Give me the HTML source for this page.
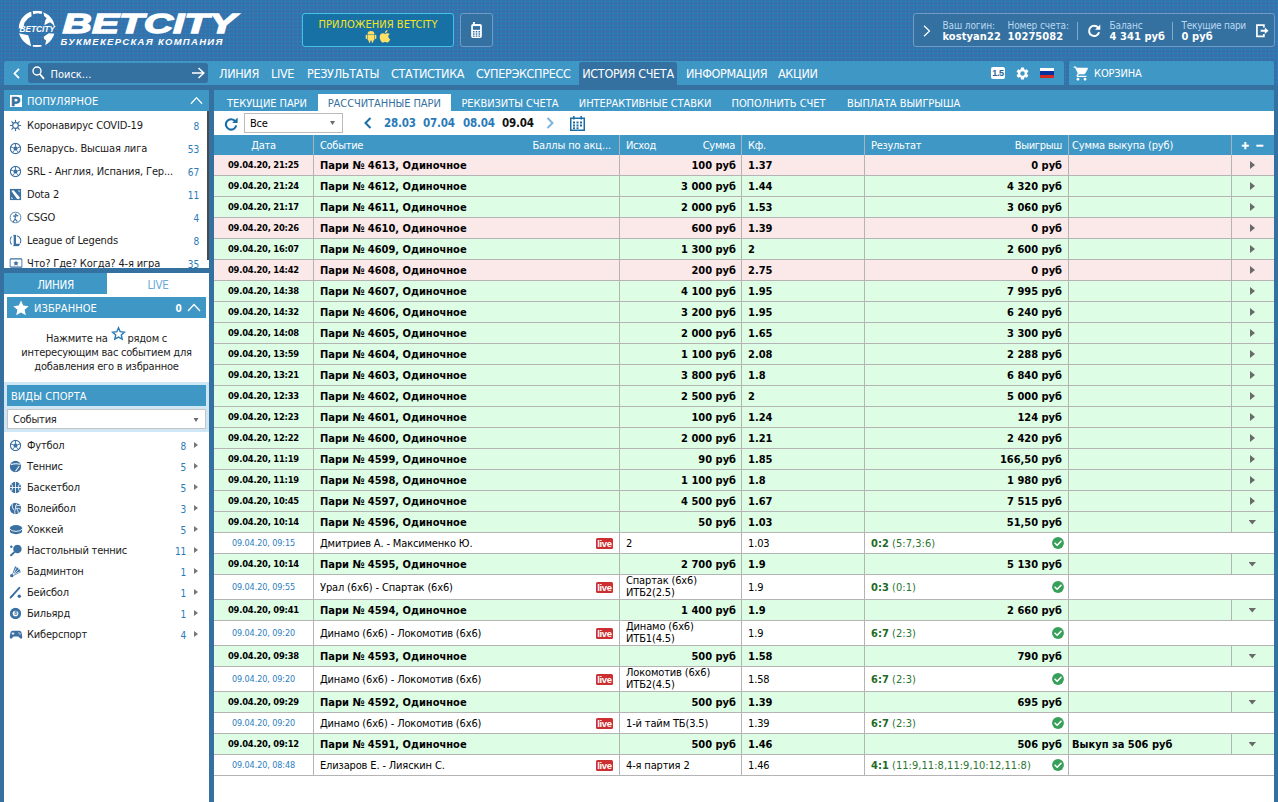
<!DOCTYPE html>
<html lang="ru"><head><meta charset="utf-8"><title>BETCITY - История счета</title>
<style>
*{box-sizing:border-box;margin:0;padding:0}
html,body{width:1278px;height:802px;overflow:hidden}
body{background:#3470a0;font-family:"DejaVu Sans Condensed","Liberation Sans",sans-serif;font-size:11px;color:#000;position:relative}
i{font-style:normal}
.abs{position:absolute}
#top{position:absolute;left:0;top:0;width:1278px;height:85px;background-color:#3a6fa6;
 background-image:linear-gradient(to right,transparent 1px,#2c7cba 1px,#2c7cba 2px,transparent 2px),linear-gradient(to bottom,transparent 1px,#2c7cba 1px,#2c7cba 2px,transparent 2px);background-size:4px 4px}
/* ---------- main ---------- */
#main{position:absolute;left:214px;top:90px;width:1060px;height:712px;background:#fff;overflow:hidden}
#subtabs{position:relative;height:21px;background:#3f97c6;color:#fff;font-size:11px;letter-spacing:-0.06px}
#subtabs .st{position:absolute;top:4px;height:17px;line-height:19px;white-space:nowrap}
#subtabs .st.act{background:#fff;color:#3470a0;text-align:center}
#filter{position:relative;height:24px;background:#fff}
#filter .refresh{position:absolute;left:10px;top:6px}
#filter .sel{position:absolute;left:30px;top:2px;width:99px;height:20px;border:1px solid #bbb;background:#fff;font-size:11px;line-height:20px;padding-left:5px;letter-spacing:-0.3px}
#filter .sel i{position:absolute;right:7px;top:7px;width:5px;height:4px;background:#6a6a6a;clip-path:polygon(0 0,100% 0,50% 100%)}
#filter .chl{position:absolute;left:150px;top:6px}
#filter .chr{position:absolute;left:332px;top:6px}
#filter .cal{position:absolute;left:356px;top:5px}
#filter .dt{position:absolute;top:4px;font-weight:bold;font-size:11.5px;color:#2a7ab8;line-height:16px;letter-spacing:-0.2px}
#filter .dt.cur{color:#111}
.tr{display:flex;height:21px;border-bottom:1px solid #b4b4b4;white-space:nowrap}
.tr .c{height:100%;border-right:1px solid #b4b4b4;line-height:22px;padding:0 6px;overflow:hidden;position:relative;flex:none}
.c1{width:100px;text-align:center;padding:0 !important}
.c2{width:306px}.c3{width:122px}.c4{width:123px}.c5{width:204px}.c6{width:163px;padding-left:3px !important}.c7{width:42px;border-right:0 !important;padding:0 !important}
.c67{width:205px;border-right:0 !important}
.rt{text-align:right;padding-right:5px !important}
.c5.rt{padding-right:6px !important}
.tr.th .c6{letter-spacing:-0.16px}
.tr.th{height:20px;background:#3f97c6;color:#fff;border-bottom:0;letter-spacing:-0.3px}
.tr.th .c{line-height:22px;border-right-color:#a9b4ba}
.tr.th .bp{position:absolute;right:8px;top:0;letter-spacing:-0.12px}
.tr.th .hr{position:absolute;right:6px;top:0}
.tr.th .pm{position:absolute;top:0;font-size:10px;-webkit-text-stroke:0.6px #fff;font-family:"DejaVu Sans",sans-serif}
.tr.th .pm:nth-child(1){left:9px}.tr.th .pm:nth-child(2){left:23.5px}
.tr.p{font-weight:bold}
.tr.p.r{background:#fbe8e8}
.tr.p.g{background:#ddfde5}
.tr.p .c1{font-size:9.3px;letter-spacing:-0.2px;line-height:20px}
.tr.ch{background:#fff;letter-spacing:-0.15px}
.tr.ch .c1{font-size:9px;color:#2c7ebf;letter-spacing:-0.1px;line-height:21px}
.tr.ch.two{height:25px}
.tr.ch.two .c{line-height:26px}
.tr.ch.two .c3{line-height:12px;padding-top:0}
.ar{position:absolute;left:18px;top:6px;border:4px solid transparent;border-left:5px solid #6a6a6a;border-right:0}
.ad{position:absolute;left:16.5px;top:8px;width:7.5px;height:4.5px;background:#6a6a6a;clip-path:polygon(0 0,100% 0,50% 100%)}
.live{position:absolute;right:6px;top:5px;width:17px;height:11px;background:#cb2f31;color:#fff;font-family:"Liberation Sans",sans-serif;font-weight:bold;font-size:9.5px;line-height:11.5px;text-align:center;letter-spacing:-0.3px;border-radius:1.5px}
.tr.ch.two .live{top:7px}
.tr.ch.two .c1{line-height:25px}
.sc{color:#2a7530;letter-spacing:0.04px}
.sc b{color:#1e6b25}
.ok{position:absolute;right:4px;top:4px}
.tr.ch.two .ok{top:6px}
/* ---------- header ---------- */
#apps{left:302px;top:13px;width:152px;height:34px;background:#1871a4;border:1px solid #45c3e6;border-radius:3px;color:#f2e61e;font-size:11px;text-align:center}
#apps .t{line-height:13px;margin-top:4px;letter-spacing:0.05px;white-space:nowrap}
#mob{left:460px;top:13px;width:33px;height:34px;background:#3470a0;border:1px solid #6d9cc6;border-radius:3px}
#login{left:913px;top:13px;width:362px;height:34px;background:#3470a0;border:1px solid #6d9cc6;border-radius:3px;color:#fff;white-space:nowrap}
#login .lb{position:absolute;top:6px;font-size:10px;line-height:12px;color:#b9d9f1;letter-spacing:-0.12px}
#login .lv{position:absolute;top:16px;font-size:11px;line-height:13px;color:#fff;letter-spacing:0.08px}
#login .sep{position:absolute;top:8px;width:1px;height:18px;background:#7fa9cf}
#nav{left:4px;top:61px;width:1060px;height:24px;background:#3f97c6;color:#fff;border-radius:3px 3px 0 0}
#basket{left:1069px;top:61px;width:205px;height:24px;background:#3f97c6;border-radius:3px 3px 0 0}
#search{left:24px;top:2px;width:180px;height:20px;background:#3470a0;border-radius:3px}
.ni{position:absolute;top:0;height:24px;line-height:26px;font-size:12.5px;letter-spacing:-0.33px;white-space:nowrap}
.ni.act{background:#3470a0;text-align:center;border-radius:3px 3px 0 0;top:1px;height:23px;line-height:24px}
#b15{left:987px;top:6px;width:14px;height:12px;background:#fff;color:#2b5f92;border-radius:2px;font-family:"Liberation Sans",sans-serif;font-weight:bold;font-size:9px;line-height:12.5px;text-align:center;letter-spacing:-0.4px}
#flag{left:1036px;top:7px;width:14px;height:10px}
#flag i{display:block;height:3.34px}
/* ---------- sidebar ---------- */
#side{left:4px;top:90px;width:205px;height:712px}
.shd{background:#3f97c6;color:#fff;white-space:nowrap}
.shd span{position:absolute;top:0;line-height:23px;font-size:11px;letter-spacing:0.08px}
.pbox{position:absolute;left:5.5px;top:4.5px;width:12.5px;height:12.5px;background:#fff;color:#3470a0;font-family:"Liberation Sans",sans-serif;font-size:13.5px;line-height:13px;text-align:center;font-weight:bold;-webkit-text-stroke:0.7px #3470a0;overflow:hidden}
#pop{left:0;top:21px;width:205px;height:157px;background:#fff;overflow:hidden;padding-top:3px}
.pr{position:relative;height:23px;line-height:23px;white-space:nowrap;letter-spacing:-0.15px}
.sr{position:relative;height:21px;line-height:21px;white-space:nowrap;letter-spacing:-0.2px}
.ic{position:absolute;left:5px;top:5px;width:14px;height:13px;line-height:0}
.sr .ic{top:4px}
.tx{position:absolute;left:23px;top:0;color:#1a1a1a}
.pr .n{position:absolute;right:10px;top:0.500px;color:#2a7ab8;font-size:10px}
.sr .n{position:absolute;right:23px;top:0.500px;color:#2a7ab8;font-size:10px}
.ar2{position:absolute;left:190px;top:7px;border:3.5px solid transparent;border-left:4.500px solid #777;border-right:0}
.thumb{position:absolute;left:202.500px;top:0;width:2.500px;height:149px;background:#4a4a4a}
#tabs{left:0;top:183px;width:205px;height:21px;background:#fff;font-size:11.5px;letter-spacing:-0.3px}
#tabs .t1{position:absolute;left:0;top:0;width:103px;height:21px;line-height:24px;text-align:center;background:#3f97c6;color:#fff}
#tabs .t2{position:absolute;left:103px;top:0;width:102px;height:21px;line-height:24px;text-align:center;color:#6aaad8}
#sbody{left:0;top:204px;width:205px;height:508px;background:#fff}
#favtxt{left:0;top:38px;width:205px;text-align:center;line-height:14px;color:#222;letter-spacing:-0.22px}
#vs{left:0;top:88px;width:205px;height:50px;background:#cfe6f4}
#vsel{left:3px;top:27px;width:199px;height:20px;background:#fff;border:1px solid #c4c4c4;line-height:19px;padding-left:5px;letter-spacing:-0.2px;color:#222}
#vsel i{position:absolute;right:6.5px;top:8px;width:5px;height:4px;background:#6a6a6a;clip-path:polygon(0 0,100% 0,50% 100%)}
#sports{left:0;top:141px;width:205px}

.ic svg{transform:scale(0.94);transform-origin:50% 50%}

</style></head>
<body>
<div id="top"></div>
<!-- logo -->
<svg id="logo" class="abs" style="left:14px;top:6px" width="230" height="46" viewBox="0 0 230 46">
 <defs><clipPath id="gc"><circle cx="22.8" cy="22.9" r="18.2"/></clipPath></defs>
 <g clip-path="url(#gc)" fill="#fff"><polygon points="4.3,22.6 9.0,21.9 10.6,16.5 14.2,12.3 17.6,10.2 17.2,5.3 10.4,7.1 5.2,14.2"/><polygon points="18.4,4.3 28.7,4.8 27.5,8.1 23.6,7.2 19.3,8.3"/><polygon points="29.4,6.2 34.8,9.0 39.1,14.2 41.4,20.8 41.4,22.2 38.6,18.2 36.0,16.2 33.1,17.7 30.3,19.2 31.3,14.2 32.7,12.3 30.1,10.0"/><polygon points="4.8,27.3 14.2,29.2 15.6,33.4 17.2,40.5 13.2,39.1 8.1,34.8 5.5,30.4"/><polygon points="18.9,39.1 27.3,39.1 28.1,41.4 18.7,41.4"/><polygon points="29.7,30.8 34.8,27.3 40.9,27.8 39.1,33.9 35.0,38.1 30.9,40.2 32.2,34.4 30.1,33.0"/></g>
 <text x="5.4" y="26.3" font-family="Liberation Sans, sans-serif" font-weight="bold" font-style="italic" font-size="8.8" fill="#fff" textLength="35.5" lengthAdjust="spacingAndGlyphs">BETCITY</text>
 <text x="48.6" y="27.35" font-family="Liberation Sans, sans-serif" font-weight="bold" font-style="italic" font-size="27.6" fill="#fff" stroke="#fff" stroke-width="1.3" textLength="173.6" lengthAdjust="spacingAndGlyphs">BETCITY</text>
 <text x="46.4" y="39.2" font-family="Liberation Sans, sans-serif" font-weight="bold" font-style="italic" font-size="9.5" fill="#fff" textLength="162" lengthAdjust="spacing">БУКМЕКЕРСКАЯ КОМПАНИЯ</text>
</svg>
<!-- apps button -->
<div class="abs" id="apps"><div class="t">ПРИЛОЖЕНИЯ BETCITY</div>
<svg class="abs" style="left:62px;top:15.500px" width="26" height="13" viewBox="0 0 26 13"><g fill="#ffe066"><path d="M2.6 4.6 h6.8 v5.2 a0.8 0.8 0 0 1 -0.8 0.8 h-5.2 a0.8 0.8 0 0 1 -0.8 -0.8 Z"/><path d="M2.6 4.1 a3.4 3.1 0 0 1 6.8 0 Z"/><rect x="0.7" y="4.7" width="1.4" height="4.2" rx="0.7"/><rect x="9.9" y="4.7" width="1.4" height="4.2" rx="0.7"/><rect x="3.8" y="9.5" width="1.5" height="3.2" rx="0.7"/><rect x="6.7" y="9.5" width="1.5" height="3.2" rx="0.7"/><path d="M22.6 3.2 c-1 0 -1.6 0.6 -2.4 0.6 c-0.8 0 -1.5 -0.6 -2.5 -0.6 c-1.6 0 -3 1.4 -3 3.8 c0 2.6 1.8 5.6 3.2 5.6 c0.8 0 1.2 -0.5 2.2 -0.5 c1 0 1.3 0.5 2.2 0.5 c1.2 0 2.3 -1.8 2.9 -3.4 c-1.2 -0.5 -1.9 -1.5 -1.9 -2.7 c0 -1.1 0.6 -2 1.5 -2.5 c-0.6 -0.6 -1.4 -0.8 -2.2 -0.8 Z"/><path d="M20 3 c0 -1.5 1.1 -2.8 2.5 -2.9 c0.1 1.6 -1.1 2.9 -2.5 2.9 Z"/></g></svg>
</div>
<!-- mobile button -->
<div class="abs" id="mob"><svg width="11" height="16" viewBox="0 0 12 18" style="position:absolute;left:9.800px;top:8px"><path d="M2 0 h2.2 v2.2 H10 a2 2 0 0 1 2 2 V16 a2 2 0 0 1 -2 2 H2 a2 2 0 0 1 -2 -2 V4.2 a2 2 0 0 1 2 -2 Z" fill="#fff"/><rect x="2" y="4.6" width="8" height="4.2" fill="#3470a0"/><g fill="#3470a0"><rect x="2" y="10.2" width="1.8" height="1.6"/><rect x="5.1" y="10.2" width="1.8" height="1.6"/><rect x="8.2" y="10.2" width="1.8" height="1.6"/><rect x="2" y="12.7" width="1.8" height="1.6"/><rect x="5.1" y="12.7" width="1.8" height="1.6"/><rect x="8.2" y="12.7" width="1.8" height="1.6"/><rect x="2" y="15.2" width="1.8" height="1.4"/><rect x="5.1" y="15.2" width="1.8" height="1.4"/><rect x="8.2" y="15.2" width="1.8" height="1.4"/></g></svg></div>
<!-- login box -->
<div class="abs" id="login">
 <svg class="abs" style="left:8.500px;top:11px" width="8" height="12" viewBox="0 0 8 12"><path d="M1 0.8 L6.5 6 L1 11.2" fill="none" stroke="#fff" stroke-width="1.2"/></svg>
 <span class="lb" style="left:28.500px">Ваш логин:</span><b class="lv" style="left:28.500px">kostyan22</b>
 <span class="lb" style="left:93.500px">Номер счета:</span><b class="lv" style="left:93.500px">10275082</b>
 <i class="sep" style="left:163px"></i>
 <svg class="abs" style="left:172.500px;top:10px" width="14" height="14" viewBox="0 0 14 14"><path d="M11.2 3.8 A5.1 5.1 0 1 0 12.1 8.3" fill="none" stroke="#fff" stroke-width="2"/><path d="M13.3 0.6 L13.3 5.8 L8.1 5.8 Z" fill="#fff"/></svg>
 <span class="lb" style="left:195.500px">Баланс</span><b class="lv" style="left:195.500px">4 341 руб</b>
 <i class="sep" style="left:258px"></i>
 <span class="lb" style="left:267.500px;letter-spacing:-0.25px">Текущие пари</span><b class="lv" style="left:267.500px">0 руб</b>
 <svg class="abs" style="left:341.500px;top:10px" width="13" height="13.500" viewBox="0 0 14 14"><path d="M8.5 3.5 V1 H1 V13 H8.5 V10.5" fill="none" stroke="#fff" stroke-width="1.8"/><path d="M5 6 H9.5 V3.6 L13.5 7 L9.5 10.4 V8 H5 Z" fill="#fff"/></svg>
</div>
<!-- nav -->
<div class="abs" id="nav">
 <svg class="abs" style="left:9px;top:7px" width="7" height="11" viewBox="0 0 7 11"><path d="M6 0.8 L1.5 5.5 L6 10.2" fill="none" stroke="#fff" stroke-width="1.8"/></svg>
 <div class="abs" id="search">
  <svg class="abs" style="left:4px;top:3px" width="13" height="14" viewBox="0 0 13 14"><circle cx="5" cy="5" r="4" fill="none" stroke="#fff" stroke-width="1.4"/><path d="M7.8 8 L12 12.8" stroke="#fff" stroke-width="1.8"/></svg>
  <span class="abs" style="left:22.5px;top:0;line-height:23px;color:#fff;font-size:11px;letter-spacing:0">Поиск...</span>
  <svg class="abs" style="left:164px;top:4px" width="13" height="12" viewBox="0 0 13 12"><path d="M0 6 H11.5 M6.5 1 L11.8 6 L6.5 11" fill="none" stroke="#fff" stroke-width="1.5"/></svg>
 </div>
 <span class="ni" style="left:215px">ЛИНИЯ</span><span class="ni" style="left:267px">LIVE</span><span class="ni" style="left:303px">РЕЗУЛЬТАТЫ</span><span class="ni" style="left:387px">СТАТИСТИКА</span><span class="ni" style="left:472px">СУПЕРЭКСПРЕСС</span><span class="ni act" style="left:575px;width:98px">ИСТОРИЯ СЧЕТА</span><span class="ni" style="left:682px">ИНФОРМАЦИЯ</span><span class="ni" style="left:774px">АКЦИИ</span>
 <span class="abs" id="b15">1.5</span>
 <svg class="abs" style="left:1011px;top:4.5px" width="15" height="15" viewBox="0 0 24 24"><path fill="#fff" d="M19.14 12.94c.04-.3.06-.61.06-.94 0-.32-.02-.64-.07-.94l2.03-1.58a.49.49 0 0 0 .12-.61l-1.92-3.32a.49.49 0 0 0-.59-.22l-2.39.96c-.5-.38-1.03-.7-1.62-.94l-.36-2.54a.48.48 0 0 0-.48-.41h-3.84c-.24 0-.43.17-.47.41l-.36 2.54c-.59.24-1.13.57-1.62.94l-2.39-.96a.49.49 0 0 0-.59.22L2.74 8.87c-.12.21-.08.47.12.61l2.03 1.58c-.05.3-.09.63-.09.94s.02.64.07.94l-2.03 1.58a.49.49 0 0 0-.12.61l1.92 3.32c.12.22.37.29.59.22l2.39-.96c.5.38 1.03.7 1.62.94l.36 2.54c.05.24.24.41.48.41h3.84c.24 0 .44-.17.47-.41l.36-2.54c.59-.24 1.13-.56 1.62-.94l2.39.96c.22.08.47 0 .59-.22l1.92-3.32c.12-.22.07-.47-.12-.61l-2.01-1.58zM12 15.6A3.6 3.6 0 1 1 12 8.4a3.6 3.6 0 0 1 0 7.2z"/></svg>
 <div class="abs" id="flag"><i style="background:#fff"></i><i style="background:#0a30a0"></i><i style="background:#d52b1e"></i></div>
</div>
<div class="abs" id="basket">
 <svg class="abs" style="left:4px;top:4px" width="17" height="17" viewBox="0 0 24 24"><path fill="#fff" d="M7 18c-1.1 0-1.99.9-1.99 2S5.900 22 7 22s2-.9 2-2-.9-2-2-2zM1 2v2h2l3.600 7.590-1.350 2.450c-.16.280-.25.610-.25.960 0 1.100.9 2 2 2h12v-2H7.420c-.14 0-.25-.11-.25-.25l.03-.12.9-1.630h7.450c.75 0 1.410-.41 1.750-1.030l3.580-6.490A1.003 1.003 0 0 0 20 4H5.210l-.94-2H1zm16 16c-1.100 0-1.990.9-1.990 2s.890 2 1.990 2 2-.9 2-2-.9-2-2-2z"/></svg>
 <span class="abs" style="left:25px;top:0;line-height:25px;color:#fff;font-size:11px;letter-spacing:-0.15px">КОРЗИНА</span>
</div>

<div class="abs" id="side">
<div class="abs shd" style="left:0;top:0;width:205px;height:21px"><b class="pbox">P</b><span style="left:23px">ПОПУЛЯРНОЕ</span><svg class="abs" style="left:185.5px;top:6px" width="13" height="9" viewBox="0 0 14 9"><path d="M1 8L7 1.500L13 8" fill="none" stroke="#fff" stroke-width="1.300"/></svg></div>
<div class="abs" id="pop">
<div class="pr"><i class="ic"><svg width="13" height="13" viewBox="0 0 13 13"><circle cx="6.5" cy="6.5" r="3" fill="none" stroke="#3a70a2" stroke-width="1.3"/><g stroke="#3a70a2" stroke-width="1.2"><path d="M6.5 0.5V3M6.5 10V12.5M0.5 6.500H3M10 6.500H12.500M2.200 2.200L4 4M9 9L10.800 10.800M10.800 2.200L9 4M4 9L2.200 10.800"/></g></svg></i><span class="tx">Коронавирус COVID-19</span><span class="n">8</span></div>
<div class="pr"><i class="ic"><svg width="13" height="13" viewBox="0 0 13 13"><circle cx="6.5" cy="6.5" r="5.4" fill="#fff" stroke="#3a70a2" stroke-width="1.2"/><path d="M6.5 3.800L9 5.600L8 8.600H5L4 5.600Z" fill="#3a70a2"/><path d="M6.5 1V3.800M9 5.600L11.800 4.800M8 8.600L9.800 11M5 8.600L3.200 11M4 5.600L1.200 4.800" stroke="#3a70a2" stroke-width="1"/></svg></i><span class="tx">Беларусь. Высшая лига</span><span class="n">53</span></div>
<div class="pr"><i class="ic"><svg width="13" height="13" viewBox="0 0 13 13"><circle cx="6.5" cy="6.5" r="5.4" fill="#fff" stroke="#3a70a2" stroke-width="1.2"/><path d="M6.5 3.800L9 5.600L8 8.600H5L4 5.600Z" fill="#3a70a2"/><path d="M6.5 1V3.800M9 5.600L11.800 4.800M8 8.600L9.800 11M5 8.600L3.200 11M4 5.600L1.200 4.800" stroke="#3a70a2" stroke-width="1"/></svg></i><span class="tx">SRL - Англия, Испания, Гер...</span><span class="n">67</span></div>
<div class="pr"><i class="ic"><svg width="13" height="13" viewBox="0 0 13 13"><rect x="0.5" y="0.5" width="12" height="12" fill="#3a70a2"/><path d="M2 2.500L4.500 2L11 9.500L10.500 11.500L8 11Z" fill="#fff"/><path d="M9 2L11 2.500L10.800 4.500Z M2 9L4 11L2.200 11Z" fill="#fff"/></svg></i><span class="tx">Dota 2</span><span class="n">11</span></div>
<div class="pr"><i class="ic"><svg width="13" height="13" viewBox="0 0 13 13"><circle cx="6.5" cy="6.5" r="5.800" fill="#fff" stroke="#3a70a2" stroke-width="1"/><circle cx="6.800" cy="3.200" r="1" fill="#3a70a2"/><path d="M4 5L9.500 4.500M6.500 4.500L6 8L4 11.500M6 8L8.500 11" stroke="#3a70a2" stroke-width="1.200" fill="none"/></svg></i><span class="tx">CSGO</span><span class="n">4</span></div>
<div class="pr"><i class="ic"><svg width="13" height="13" viewBox="0 0 13 13"><path d="M2.300 2.500A6 6 0 0 0 2.300 10.500" fill="none" stroke="#3a70a2" stroke-width="1.200"/><path d="M8 1.500A5.500 5.500 0 0 1 11.500 9.500" fill="none" stroke="#3a70a2" stroke-width="1.200"/><path d="M3.800 0.500H7V10H11.500L10 12.500H3.800L4.600 11V2Z" fill="#3a70a2"/></svg></i><span class="tx">League of Legends</span><span class="n">8</span></div>
<div class="pr"><i class="ic"><svg width="14" height="13" viewBox="0 0 14 13"><rect x="0.600" y="1.600" width="12.800" height="8.800" rx="1" fill="#fff" stroke="#3a70a2" stroke-width="1.200"/><path d="M7 3.200L7.900 5.200L10 5.400L8.400 6.800L8.900 8.900L7 7.800L5.100 8.900L5.600 6.800L4 5.400L6.100 5.200Z" fill="#3a70a2"/><path d="M4 12.300H10" stroke="#3a70a2" stroke-width="1.200"/></svg></i><span class="tx">Что? Где? Когда? 4-я игра</span><span class="n">35</span></div>
<i class="thumb"></i></div>
<div class="abs" id="tabs"><span class="t1">ЛИНИЯ</span><span class="t2">LIVE</span></div>
<div class="abs" id="sbody">
<div class="abs shd" style="left:3px;top:3px;width:199px;height:21px"><svg class="abs" style="left:5.500px;top:2.500px" width="16" height="16" viewBox="0 0 15 15"><path d="M7.500 0.500L9.600 5.200L14.700 5.800L10.900 9.200L12 14.300L7.500 11.700L3 14.300L4.100 9.200L0.300 5.800L5.400 5.200Z" fill="#fff"/></svg><span style="left:27px">ИЗБРАННОЕ</span><b class="abs" style="left:168.500px;top:0;line-height:23px;font-size:10px">0</b><svg class="abs" style="left:180px;top:6px" width="14" height="9" viewBox="0 0 14 9"><path d="M1 8L7 1.500L13 8" fill="none" stroke="#fff" stroke-width="1.300"/></svg></div>
<div class="abs" id="favtxt">Нажмите на <svg width="15" height="15" viewBox="0 0 15 15" style="vertical-align:1px;margin:-6px -1px 0 0"><path d="M7.500 1.800L9.200 5.700L13.400 6.200L10.300 9L11.200 13.200L7.500 11.100L3.800 13.200L4.700 9L1.600 6.200L5.800 5.700Z" fill="none" stroke="#2a7ab8" stroke-width="1.400"/></svg> рядом с<br>интересующим вас событием для<br>добавления его в избранное</div>
<div class="abs" id="vs"><div class="abs shd" style="left:3px;top:3px;width:199px;height:21px"><span style="left:4px">ВИДЫ СПОРТА</span></div><div class="abs" id="vsel"><span>События</span><i></i></div></div>
<div class="abs" id="sports">
<div class="sr"><i class="ic"><svg width="13" height="13" viewBox="0 0 13 13"><circle cx="6.5" cy="6.5" r="5.4" fill="#fff" stroke="#3a70a2" stroke-width="1.2"/><path d="M6.5 3.800L9 5.600L8 8.600H5L4 5.600Z" fill="#3a70a2"/><path d="M6.5 1V3.800M9 5.600L11.800 4.800M8 8.600L9.800 11M5 8.600L3.200 11M4 5.600L1.200 4.800" stroke="#3a70a2" stroke-width="1"/></svg></i><span class="tx">Футбол</span><span class="n">8</span><i class="ar2"></i></div>
<div class="sr"><i class="ic"><svg width="13" height="13" viewBox="0 0 13 13"><circle cx="6.500" cy="6.500" r="6" fill="#3a70a2"/><path d="M1.500 4.500Q6.500 3 11.800 4.200" stroke="#fff" stroke-width="1.100" fill="none"/><path d="M10.500 6L6.500 11.500" stroke="#fff" stroke-width="1.100" fill="none"/></svg></i><span class="tx">Теннис</span><span class="n">5</span><i class="ar2"></i></div>
<div class="sr"><i class="ic"><svg width="13" height="13" viewBox="0 0 13 13"><circle cx="6.500" cy="6.500" r="6" fill="#3a70a2"/><path d="M6.500 0.500V12.500M0.500 6.500H12.500M2.200 2.200Q5 6.500 2.200 10.800M10.800 2.200Q8 6.500 10.800 10.800" stroke="#fff" stroke-width="0.900" fill="none"/></svg></i><span class="tx">Баскетбол</span><span class="n">5</span><i class="ar2"></i></div>
<div class="sr"><i class="ic"><svg width="13" height="13" viewBox="0 0 13 13"><circle cx="6.500" cy="6.500" r="6" fill="#3a70a2"/><path d="M6.500 6.500Q6 3 8.500 0.800M6.500 6.500Q9.500 5.500 12.300 7.500M6.500 6.500Q5 9.500 6 12.300M3 1.800Q2.500 5 4.500 8M11.500 3.500Q8.500 2.800 6.400 4M9.500 11.500Q9.500 9 8 7" stroke="#fff" stroke-width="0.900" fill="none"/></svg></i><span class="tx">Волейбол</span><span class="n">3</span><i class="ar2"></i></div>
<div class="sr"><i class="ic"><svg width="14" height="13" viewBox="0 0 14 13"><path d="M0.500 5V8.500A6.500 3 0 0 0 13.500 8.500V5Z" fill="#3a70a2"/><ellipse cx="7" cy="4.800" rx="6.500" ry="3" fill="#3a70a2" stroke="#fff" stroke-width="0"/><path d="M0.700 6.200A6.500 3 0 0 0 13.300 6.200" stroke="#fff" stroke-width="0.900" fill="none"/></svg></i><span class="tx">Хоккей</span><span class="n">5</span><i class="ar2"></i></div>
<div class="sr"><i class="ic"><svg width="14" height="13" viewBox="0 0 14 13"><circle cx="8.500" cy="4.800" r="4.500" fill="#3a70a2"/><path d="M5.500 8L1 12.300" stroke="#3a70a2" stroke-width="2"/><circle cx="2" cy="2.500" r="1.300" fill="#3a70a2"/></svg></i><span class="tx">Настольный теннис</span><span class="n">11</span><i class="ar2"></i></div>
<div class="sr"><i class="ic"><svg width="14" height="13" viewBox="0 0 14 13"><path d="M3 9.500L6 1L8 2L10.500 4L12.500 7L4.500 11Z" fill="#3a70a2"/><path d="M3.600 10.200L7.500 2M3.600 10.200L10 4M3.600 10.200L12 6.500" stroke="#fff" stroke-width="0.800"/><circle cx="2.500" cy="11" r="1.800" fill="#3a70a2"/></svg></i><span class="tx">Бадминтон</span><span class="n">1</span><i class="ar2"></i></div>
<div class="sr"><i class="ic"><svg width="14" height="13" viewBox="0 0 14 13"><path d="M1 12.300L10.500 1.500" stroke="#3a70a2" stroke-width="2" stroke-linecap="round"/><path d="M0.800 12.500L4 9" stroke="#3a70a2" stroke-width="1.100"/><circle cx="10.500" cy="10.500" r="1.800" fill="#3a70a2"/></svg></i><span class="tx">Бейсбол</span><span class="n">1</span><i class="ar2"></i></div>
<div class="sr"><i class="ic"><svg width="13" height="13" viewBox="0 0 13 13"><circle cx="6.500" cy="6.500" r="6" fill="#3a70a2"/><circle cx="6.500" cy="6.500" r="3" fill="#fff"/><text x="6.500" y="8.600" font-family="Liberation Sans,sans-serif" font-size="5.500" font-weight="bold" text-anchor="middle" fill="#3a70a2">8</text></svg></i><span class="tx">Бильярд</span><span class="n">1</span><i class="ar2"></i></div>
<div class="sr"><i class="ic"><svg width="14" height="13" viewBox="0 0 14 13"><path d="M3.500 2.500H10.500Q12.500 2.500 13 5L13.800 9.500Q13.800 11 12.300 11Q11.300 11 10.300 9.500L9.500 8.500H4.500L3.700 9.500Q2.700 11 1.700 11Q0.200 11 0.200 9.500L1 5Q1.500 2.500 3.500 2.500Z" fill="#3a70a2"/><path d="M3.800 4V7M2.300 5.500H5.300" stroke="#fff" stroke-width="0.900"/><circle cx="10.200" cy="4.700" r="0.700" fill="#fff"/><circle cx="11.300" cy="6" r="0.700" fill="#fff"/></svg></i><span class="tx">Киберспорт</span><span class="n">4</span><i class="ar2"></i></div>
</div></div></div>
<div id="main">
<div id="subtabs"><span class="st" style="left:13px">ТЕКУЩИЕ ПАРИ</span><span class="st act" style="left:104px;width:132.5px">РАССЧИТАННЫЕ ПАРИ</span><span class="st" style="left:247.4px">РЕКВИЗИТЫ СЧЕТА</span><span class="st" style="left:364.8px">ИНТЕРАКТИВНЫЕ СТАВКИ</span><span class="st" style="left:517.5px">ПОПОЛНИТЬ СЧЕТ</span><span class="st" style="left:633px">ВЫПЛАТА ВЫИГРЫША</span></div>
<div id="filter">
<svg class="refresh" width="14" height="14" viewBox="0 0 14 14"><path d="M11.3 4.4 A5.2 5.2 0 1 0 12.2 8.4" fill="none" stroke="#1a6ea5" stroke-width="2.1"/><path d="M13.6 0.6 L13.6 6 L8.2 6 Z" fill="#1a6ea5"/></svg>
<div class="sel"><span>Все</span><i></i></div>
<svg class="chl" width="8" height="12" viewBox="0 0 8 12"><path d="M6.5 1 L1.5 6 L6.5 11" fill="none" stroke="#1a6ea5" stroke-width="2"/></svg>
<span class="dt" style="left:170px">28.03</span><span class="dt" style="left:209px">07.04</span><span class="dt" style="left:249px">08.04</span><span class="dt cur" style="left:288px">09.04</span>
<svg class="chr" width="8" height="12" viewBox="0 0 8 12"><path d="M1.5 1 L6.5 6 L1.5 11" fill="none" stroke="#7db4dc" stroke-width="2"/></svg>
<svg class="cal" width="15" height="15" viewBox="0 0 15 15"><rect x="0.75" y="2.25" width="13.5" height="12" fill="none" stroke="#1a6ea5" stroke-width="1.5"/><rect x="3" y="0" width="1.6" height="3.5" fill="#1a6ea5"/><rect x="10.4" y="0" width="1.6" height="3.5" fill="#1a6ea5"/><g fill="#1a6ea5"><rect x="3" y="5.5" width="2" height="2"/><rect x="6.5" y="5.5" width="2" height="2"/><rect x="10" y="5.5" width="2" height="2"/><rect x="3" y="8.5" width="2" height="2"/><rect x="6.5" y="8.5" width="2" height="2"/><rect x="10" y="8.5" width="2" height="2"/><rect x="3" y="11.3" width="2" height="1.7"/><rect x="6.5" y="11.3" width="2" height="1.7"/></g></svg>
</div>
<div class="tr th"><div class="c c1">Дата</div><div class="c c2">Событие<span class="bp">Баллы по акц...</span></div><div class="c c3">Исход<span class="hr">Сумма</span></div><div class="c c4">Кф.</div><div class="c c5">Результат<span class="hr">Выигрыш</span></div><div class="c c6">Сумма выкупа (руб)</div><div class="c c7"><b class="pm">+</b><b class="pm">−</b></div></div>
<div class="tr p r"><div class="c c1">09.04.20, 21:25</div><div class="c c2">Пари № 4613, Одиночное</div><div class="c c3 rt">100 руб</div><div class="c c4">1.37</div><div class="c c5 rt">0 руб</div><div class="c c6"></div><div class="c c7"><i class="ar"></i></div></div>
<div class="tr p g"><div class="c c1">09.04.20, 21:24</div><div class="c c2">Пари № 4612, Одиночное</div><div class="c c3 rt">3 000 руб</div><div class="c c4">1.44</div><div class="c c5 rt">4 320 руб</div><div class="c c6"></div><div class="c c7"><i class="ar"></i></div></div>
<div class="tr p g"><div class="c c1">09.04.20, 21:17</div><div class="c c2">Пари № 4611, Одиночное</div><div class="c c3 rt">2 000 руб</div><div class="c c4">1.53</div><div class="c c5 rt">3 060 руб</div><div class="c c6"></div><div class="c c7"><i class="ar"></i></div></div>
<div class="tr p r"><div class="c c1">09.04.20, 20:26</div><div class="c c2">Пари № 4610, Одиночное</div><div class="c c3 rt">600 руб</div><div class="c c4">1.39</div><div class="c c5 rt">0 руб</div><div class="c c6"></div><div class="c c7"><i class="ar"></i></div></div>
<div class="tr p g"><div class="c c1">09.04.20, 16:07</div><div class="c c2">Пари № 4609, Одиночное</div><div class="c c3 rt">1 300 руб</div><div class="c c4">2</div><div class="c c5 rt">2 600 руб</div><div class="c c6"></div><div class="c c7"><i class="ar"></i></div></div>
<div class="tr p r"><div class="c c1">09.04.20, 14:42</div><div class="c c2">Пари № 4608, Одиночное</div><div class="c c3 rt">200 руб</div><div class="c c4">2.75</div><div class="c c5 rt">0 руб</div><div class="c c6"></div><div class="c c7"><i class="ar"></i></div></div>
<div class="tr p g"><div class="c c1">09.04.20, 14:38</div><div class="c c2">Пари № 4607, Одиночное</div><div class="c c3 rt">4 100 руб</div><div class="c c4">1.95</div><div class="c c5 rt">7 995 руб</div><div class="c c6"></div><div class="c c7"><i class="ar"></i></div></div>
<div class="tr p g"><div class="c c1">09.04.20, 14:32</div><div class="c c2">Пари № 4606, Одиночное</div><div class="c c3 rt">3 200 руб</div><div class="c c4">1.95</div><div class="c c5 rt">6 240 руб</div><div class="c c6"></div><div class="c c7"><i class="ar"></i></div></div>
<div class="tr p g"><div class="c c1">09.04.20, 14:08</div><div class="c c2">Пари № 4605, Одиночное</div><div class="c c3 rt">2 000 руб</div><div class="c c4">1.65</div><div class="c c5 rt">3 300 руб</div><div class="c c6"></div><div class="c c7"><i class="ar"></i></div></div>
<div class="tr p g"><div class="c c1">09.04.20, 13:59</div><div class="c c2">Пари № 4604, Одиночное</div><div class="c c3 rt">1 100 руб</div><div class="c c4">2.08</div><div class="c c5 rt">2 288 руб</div><div class="c c6"></div><div class="c c7"><i class="ar"></i></div></div>
<div class="tr p g"><div class="c c1">09.04.20, 13:21</div><div class="c c2">Пари № 4603, Одиночное</div><div class="c c3 rt">3 800 руб</div><div class="c c4">1.8</div><div class="c c5 rt">6 840 руб</div><div class="c c6"></div><div class="c c7"><i class="ar"></i></div></div>
<div class="tr p g"><div class="c c1">09.04.20, 12:33</div><div class="c c2">Пари № 4602, Одиночное</div><div class="c c3 rt">2 500 руб</div><div class="c c4">2</div><div class="c c5 rt">5 000 руб</div><div class="c c6"></div><div class="c c7"><i class="ar"></i></div></div>
<div class="tr p g"><div class="c c1">09.04.20, 12:23</div><div class="c c2">Пари № 4601, Одиночное</div><div class="c c3 rt">100 руб</div><div class="c c4">1.24</div><div class="c c5 rt">124 руб</div><div class="c c6"></div><div class="c c7"><i class="ar"></i></div></div>
<div class="tr p g"><div class="c c1">09.04.20, 12:22</div><div class="c c2">Пари № 4600, Одиночное</div><div class="c c3 rt">2 000 руб</div><div class="c c4">1.21</div><div class="c c5 rt">2 420 руб</div><div class="c c6"></div><div class="c c7"><i class="ar"></i></div></div>
<div class="tr p g"><div class="c c1">09.04.20, 11:19</div><div class="c c2">Пари № 4599, Одиночное</div><div class="c c3 rt">90 руб</div><div class="c c4">1.85</div><div class="c c5 rt">166,50 руб</div><div class="c c6"></div><div class="c c7"><i class="ar"></i></div></div>
<div class="tr p g"><div class="c c1">09.04.20, 11:19</div><div class="c c2">Пари № 4598, Одиночное</div><div class="c c3 rt">1 100 руб</div><div class="c c4">1.8</div><div class="c c5 rt">1 980 руб</div><div class="c c6"></div><div class="c c7"><i class="ar"></i></div></div>
<div class="tr p g"><div class="c c1">09.04.20, 10:45</div><div class="c c2">Пари № 4597, Одиночное</div><div class="c c3 rt">4 500 руб</div><div class="c c4">1.67</div><div class="c c5 rt">7 515 руб</div><div class="c c6"></div><div class="c c7"><i class="ar"></i></div></div>
<div class="tr p g"><div class="c c1">09.04.20, 10:14</div><div class="c c2">Пари № 4596, Одиночное</div><div class="c c3 rt">50 руб</div><div class="c c4">1.03</div><div class="c c5 rt">51,50 руб</div><div class="c c6"></div><div class="c c7"><i class="ad"></i></div></div>
<div class="tr ch"><div class="c c1">09.04.20, 09:15</div><div class="c c2"><span class="ev">Дмитриев А. - Максименко Ю.</span><b class="live">live</b></div><div class="c c3">2</div><div class="c c4">1.03</div><div class="c c5"><span class="sc"><b>0:2</b> (5:7,3:6)</span><svg class="ok" width="12" height="12" viewBox="0 0 13 13"><circle cx="6.5" cy="6.5" r="6.4" fill="#36a05a"/><path d="M3.3 6.7 L5.6 9 L9.8 4.6" fill="none" stroke="#fff" stroke-width="1.7" stroke-linecap="round" stroke-linejoin="round"/></svg></div><div class="c c67"></div></div>
<div class="tr p g"><div class="c c1">09.04.20, 10:14</div><div class="c c2">Пари № 4595, Одиночное</div><div class="c c3 rt">2 700 руб</div><div class="c c4">1.9</div><div class="c c5 rt">5 130 руб</div><div class="c c6"></div><div class="c c7"><i class="ad"></i></div></div>
<div class="tr ch two"><div class="c c1">09.04.20, 09:55</div><div class="c c2"><span class="ev">Урал (6х6) - Спартак (6х6)</span><b class="live">live</b></div><div class="c c3">Спартак (6х6)<br>ИТБ2(2.5)</div><div class="c c4">1.9</div><div class="c c5"><span class="sc"><b>0:3</b> (0:1)</span><svg class="ok" width="12" height="12" viewBox="0 0 13 13"><circle cx="6.5" cy="6.5" r="6.4" fill="#36a05a"/><path d="M3.3 6.7 L5.6 9 L9.8 4.6" fill="none" stroke="#fff" stroke-width="1.7" stroke-linecap="round" stroke-linejoin="round"/></svg></div><div class="c c67"></div></div>
<div class="tr p g"><div class="c c1">09.04.20, 09:41</div><div class="c c2">Пари № 4594, Одиночное</div><div class="c c3 rt">1 400 руб</div><div class="c c4">1.9</div><div class="c c5 rt">2 660 руб</div><div class="c c6"></div><div class="c c7"><i class="ad"></i></div></div>
<div class="tr ch two"><div class="c c1">09.04.20, 09:20</div><div class="c c2"><span class="ev">Динамо (6х6) - Локомотив (6х6)</span><b class="live">live</b></div><div class="c c3">Динамо (6х6)<br>ИТБ1(4.5)</div><div class="c c4">1.9</div><div class="c c5"><span class="sc"><b>6:7</b> (2:3)</span><svg class="ok" width="12" height="12" viewBox="0 0 13 13"><circle cx="6.5" cy="6.5" r="6.4" fill="#36a05a"/><path d="M3.3 6.7 L5.6 9 L9.8 4.6" fill="none" stroke="#fff" stroke-width="1.7" stroke-linecap="round" stroke-linejoin="round"/></svg></div><div class="c c67"></div></div>
<div class="tr p g"><div class="c c1">09.04.20, 09:38</div><div class="c c2">Пари № 4593, Одиночное</div><div class="c c3 rt">500 руб</div><div class="c c4">1.58</div><div class="c c5 rt">790 руб</div><div class="c c6"></div><div class="c c7"><i class="ad"></i></div></div>
<div class="tr ch two"><div class="c c1">09.04.20, 09:20</div><div class="c c2"><span class="ev">Динамо (6х6) - Локомотив (6х6)</span><b class="live">live</b></div><div class="c c3">Локомотив (6х6)<br>ИТБ2(4.5)</div><div class="c c4">1.58</div><div class="c c5"><span class="sc"><b>6:7</b> (2:3)</span><svg class="ok" width="12" height="12" viewBox="0 0 13 13"><circle cx="6.5" cy="6.5" r="6.4" fill="#36a05a"/><path d="M3.3 6.7 L5.6 9 L9.8 4.6" fill="none" stroke="#fff" stroke-width="1.7" stroke-linecap="round" stroke-linejoin="round"/></svg></div><div class="c c67"></div></div>
<div class="tr p g"><div class="c c1">09.04.20, 09:29</div><div class="c c2">Пари № 4592, Одиночное</div><div class="c c3 rt">500 руб</div><div class="c c4">1.39</div><div class="c c5 rt">695 руб</div><div class="c c6"></div><div class="c c7"><i class="ad"></i></div></div>
<div class="tr ch"><div class="c c1">09.04.20, 09:20</div><div class="c c2"><span class="ev">Динамо (6х6) - Локомотив (6х6)</span><b class="live">live</b></div><div class="c c3">1-й тайм ТБ(3.5)</div><div class="c c4">1.39</div><div class="c c5"><span class="sc"><b>6:7</b> (2:3)</span><svg class="ok" width="12" height="12" viewBox="0 0 13 13"><circle cx="6.5" cy="6.5" r="6.4" fill="#36a05a"/><path d="M3.3 6.7 L5.6 9 L9.8 4.6" fill="none" stroke="#fff" stroke-width="1.7" stroke-linecap="round" stroke-linejoin="round"/></svg></div><div class="c c67"></div></div>
<div class="tr p g"><div class="c c1">09.04.20, 09:12</div><div class="c c2">Пари № 4591, Одиночное</div><div class="c c3 rt">500 руб</div><div class="c c4">1.46</div><div class="c c5 rt">506 руб</div><div class="c c6">Выкуп за 506 руб</div><div class="c c7"><i class="ad"></i></div></div>
<div class="tr ch"><div class="c c1">09.04.20, 08:48</div><div class="c c2"><span class="ev">Елизаров Е. - Лияскин С.</span><b class="live">live</b></div><div class="c c3">4-я партия 2</div><div class="c c4">1.46</div><div class="c c5"><span class="sc"><b>4:1</b> (11:9,11:8,11:9,10:12,11:8)</span><svg class="ok" width="12" height="12" viewBox="0 0 13 13"><circle cx="6.5" cy="6.5" r="6.4" fill="#36a05a"/><path d="M3.3 6.7 L5.6 9 L9.8 4.6" fill="none" stroke="#fff" stroke-width="1.7" stroke-linecap="round" stroke-linejoin="round"/></svg></div><div class="c c67"></div></div>
</div>
</body></html>
